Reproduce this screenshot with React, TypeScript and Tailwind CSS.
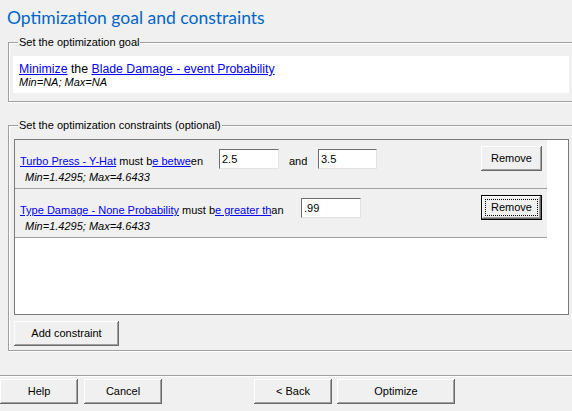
import React from 'react';

const bevel =
  'bg-[#f0f0f0] shadow-[inset_-1px_-1px_#696969,inset_1px_1px_#ffffff,inset_-2px_-2px_#a0a0a0,inset_2px_2px_#f0f0f0] text-[11px] leading-[13px] text-black flex items-center justify-center';

const Btn = ({ label, className = '' }: { label: string; className?: string }) => (
  <button className={`${bevel} h-[25px] ${className}`}>{label}</button>
);

const FocusBtn = ({ label, className = '' }: { label: string; className?: string }) => (
  <button className={`h-[25px] border border-black ${className}`}>
    <div className={`${bevel} h-full w-full p-[3px]`}>
      <div className="w-full h-full border border-dotted border-black flex items-center justify-center">{label}</div>
    </div>
  </button>
);

const Link = ({ children }: { children: React.ReactNode }) => (
  <span className="text-[#0000ff] underline decoration-[#0000ff] underline-offset-[1px]">{children}</span>
);

const Field = ({ value, className = '' }: { value: string; className?: string }) => (
  <input
    readOnly
    value={value}
    className={`h-[20px] bg-white border border-t-[#6e6e6e] border-l-[#6e6e6e] border-r-[#e3e3e3] border-b-[#e3e3e3] pl-[2px] text-[11px] text-black outline-none ${className}`}
  />
);

const Group = ({ legend, children, className = '' }: { legend: string; children: React.ReactNode; className?: string }) => (
  <div className={`ml-[8px] border border-r-0 border-[#a0a0a0] shadow-[inset_1px_1px_#ffffff,0_1px_#ffffff] ${className}`}>
    <div className="-mt-[8px] ml-[9px] w-fit px-[1px] bg-[#f0f0f0] leading-[14px]">{legend}</div>
    {children}
  </div>
);

const Constraint = ({
  label,
  labelW,
  fields,
  focused,
}: {
  label: React.ReactNode;
  labelW: string;
  fields: React.ReactNode;
  focused?: boolean;
}) => (
  <div className="h-[49px] w-[532px] bg-[#f0f0f0] border-b border-[#a0a0a0] flex flex-col">
    <div className="flex items-start h-[31px]">
      <div className={`pl-[5px] mt-[15px] leading-[13px] whitespace-nowrap ${labelW}`}>{label}</div>
      {fields}
      {focused ? (
        <FocusBtn label="Remove" className="ml-auto mr-[5px] mt-[6px] w-[61px]" />
      ) : (
        <Btn label="Remove" className="ml-auto mr-[5px] mt-[6px] w-[61px]" />
      )}
    </div>
    <div className="pl-[10px] italic leading-[13px]">Min=1.4295; Max=4.6433</div>
  </div>
);

export default function App() {
  return (
    <div className="w-[572px] h-[411px] bg-[#f0f0f0] overflow-hidden font-['Liberation_Sans',Arial,sans-serif] text-[11px] text-black">
      <div className="h-[42px] pt-[6px] pl-[7px] font-['Lato',sans-serif] text-[17.5px] leading-[24px] text-[#0066cc]">
        Optimization goal and constraints
      </div>

      <Group legend="Set the optimization goal">
        <div className="mt-[7px] ml-[4px] mr-[3px] mb-[8px] h-[37px] bg-white pl-[6px] pt-[6px]">
          <div className="text-[12.3px] leading-[14px]">
            <Link>Minimize</Link> the <Link>Blade Damage - event Probability</Link>
          </div>
          <div className="leading-[13px] italic">Min=NA; Max=NA</div>
        </div>
      </Group>

      <Group legend="Set the optimization constraints (optional)" className="mt-[23px]">
        <div className="mt-[7px] ml-[5px] mr-[3px] h-[176px] bg-white border border-[#7a7a7a]">
          <Constraint
            labelW="w-[204px]"
            label={
              <>
                <Link>Turbo Press - Y-Hat</Link> must b<Link>e betwe</Link>en
              </>
            }
            fields={
              <>
                <Field value="2.5" className="mt-[9px] w-[60px]" />
                <div className="ml-[10px] w-[29px] mt-[15px] leading-[13px]">and</div>
                <Field value="3.5" className="mt-[9px] w-[59px]" />
              </>
            }
          />
          <Constraint
            focused
            labelW="w-[286px]"
            label={
              <>
                <Link>Type Damage - None Probability</Link> must b<Link>e greater th</Link>an
              </>
            }
            fields={<Field value=".99" className="mt-[9px] w-[60px]" />}
          />
        </div>
        <Btn label="Add constraint" className="mt-[6px] ml-[5px] mb-[4px] w-[105px]" />
      </Group>

      <div className="mt-[24px] h-[2px] border-t border-[#a0a0a0] border-b border-b-white" />

      <div className="mt-[2px] flex">
        <Btn label="Help" className="w-[78px]" />
        <Btn label="Cancel" className="ml-[6px] w-[78px]" />
        <Btn label="< Back" className="ml-[92px] w-[78px]" />
        <Btn label="Optimize" className="ml-[5px] w-[118px]" />
      </div>
    </div>
  );
}
